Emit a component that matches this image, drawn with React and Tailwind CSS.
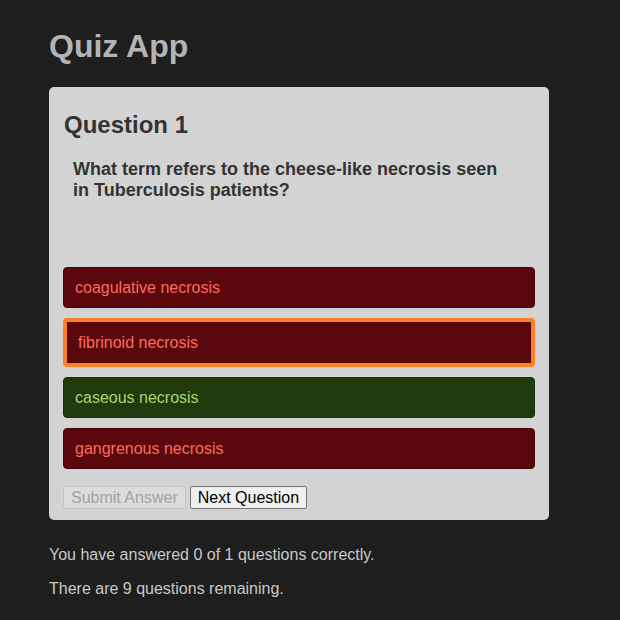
const options = [
  { label: 'coagulative necrosis', state: 'wrong' },
  { label: 'fibrinoid necrosis', state: 'selected' },
  { label: 'caseous necrosis', state: 'correct' },
  { label: 'gangrenous necrosis', state: 'wrong' },
]

function Option({ label, state }) {
  if (state === 'correct') {
    return (
      <div className="w-full rounded-[4px] border border-[#18300a] bg-[#1f3a0d] px-[11px] py-[10px] text-[16px] leading-[19px] text-[#a8d672]">
        {label}
      </div>
    )
  }
  if (state === 'selected') {
    return (
      <div className="w-full rounded-[4px] border-4 border-[#ff7f24] bg-[#5a070d] px-[11px] py-[11px] text-[16px] leading-[19px] text-[#ff6b5c]">
        {label}
      </div>
    )
  }
  return (
    <div className="w-full rounded-[4px] border border-[#45050a] bg-[#5a070d] px-[11px] py-[10px] text-[16px] leading-[19px] text-[#ff6b5c]">
      {label}
    </div>
  )
}

export default function App() {
  return (
    <main
      className="min-h-screen bg-[#1e1e1e] px-[49px] pt-[28px]"
      style={{ fontFamily: '"Liberation Sans", Arial, sans-serif' }}
    >
      <h1 className="text-[32px] font-bold leading-[37px] text-[#b4b4b4]">Quiz App</h1>

      <div className="mt-[22px] w-[500px] rounded-[5px] bg-[#d3d3d3] px-[14px] pt-[24px] pb-[11px]">
        <h2 className="pl-[1px] text-[24px] font-bold leading-[28px] text-[#333333]">Question 1</h2>
        <p className="mt-[20px] pl-[10px] pr-[28px] text-[18px] font-bold leading-[21px] text-[#333333]">
          What term refers to the cheese-like necrosis seen in Tuberculosis patients?
        </p>

        <div className="mt-[66px] flex flex-col gap-[10px]">
          {options.map((o) => (
            <Option key={o.label} label={o.label} state={o.state} />
          ))}
        </div>

        <div className="mt-[17px] flex gap-[4px]">
          <button
            disabled
            className="h-[23px] rounded-[2px] border border-[#c4c4c4] bg-[#dcdcdc] px-[7px] text-[16px] leading-[19px] text-[#a2a2a2]"
          >
            Submit Answer
          </button>
          <button className="h-[23px] rounded-[2px] border border-[#767676] bg-[#f0f0f0] px-[7px] text-[16px] leading-[19px] text-black">
            Next Question
          </button>
        </div>
      </div>

      <p className="mt-[26px] text-[16px] leading-[18px] text-[#c8c8c8]">
        You have answered 0 of 1 questions correctly.
      </p>
      <p className="mt-[16px] text-[16px] leading-[18px] text-[#c8c8c8]">
        There are 9 questions remaining.
      </p>
    </main>
  )
}
